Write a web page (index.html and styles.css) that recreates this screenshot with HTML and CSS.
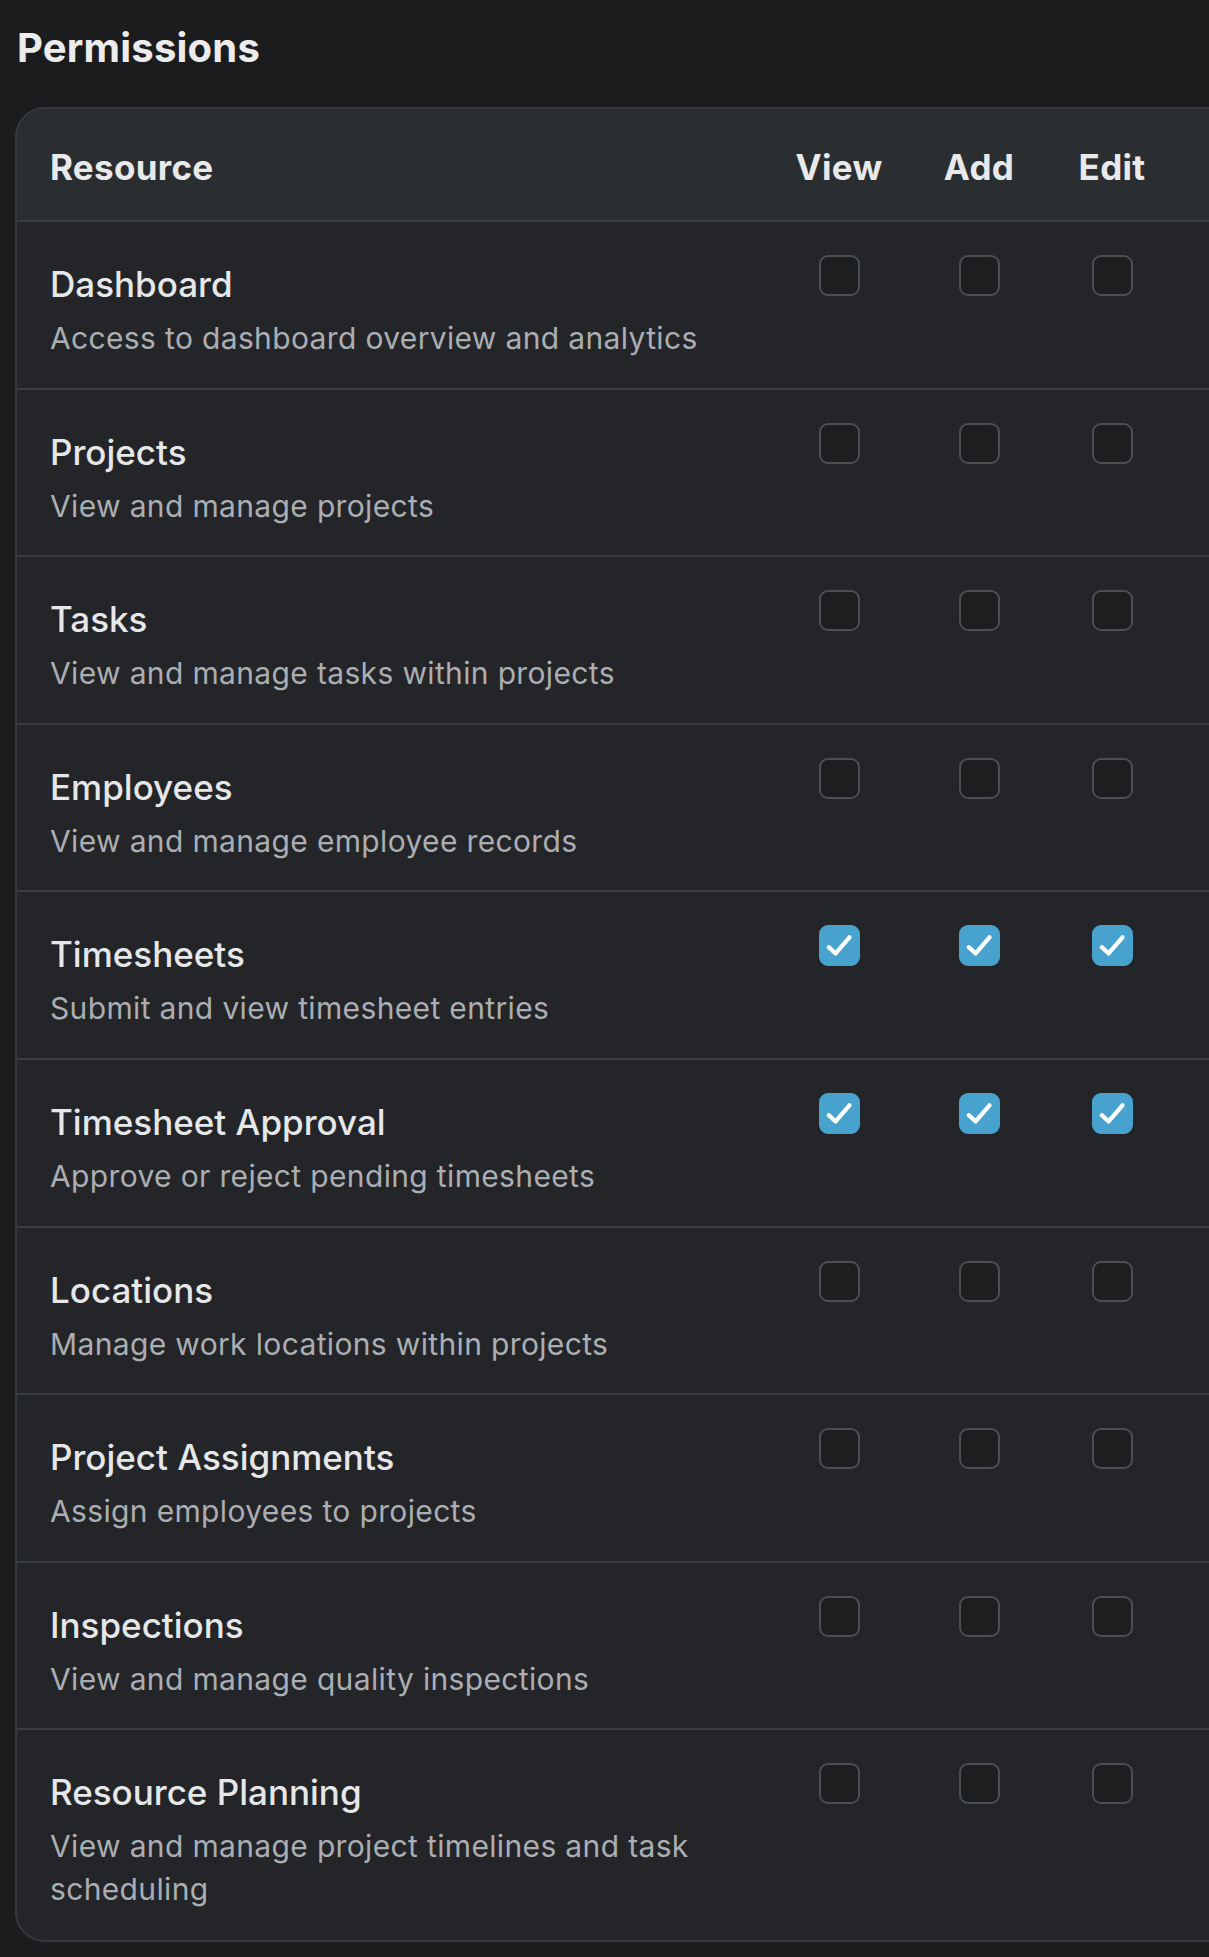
FILE: index.html
```html
<!DOCTYPE html>
<html lang="en">
<head>
<meta charset="utf-8">
<title>Permissions</title>
<link rel="stylesheet" href="styles.css">
</head>
<body>
<div class="page">
  <h2 class="title">Permissions</h2>
  <div class="card">
    <table class="perm">
      <colgroup>
        <col class="c-res"><col class="c-view"><col class="c-add"><col class="c-edit"><col class="c-rest">
      </colgroup>
      <thead>
        <tr><th class="th-res">Resource</th><th>View</th><th>Add</th><th>Edit</th><th></th></tr>
      </thead>
      <tbody>
        <tr>
          <td class="res"><div class="name">Dashboard</div><div class="desc">Access to dashboard overview and analytics</div></td>
          <td class="chk"><span class="cb"></span></td><td class="chk"><span class="cb"></span></td><td class="chk"><span class="cb"></span></td><td></td>
        </tr>
        <tr>
          <td class="res"><div class="name">Projects</div><div class="desc">View and manage projects</div></td>
          <td class="chk"><span class="cb"></span></td><td class="chk"><span class="cb"></span></td><td class="chk"><span class="cb"></span></td><td></td>
        </tr>
        <tr>
          <td class="res"><div class="name">Tasks</div><div class="desc">View and manage tasks within projects</div></td>
          <td class="chk"><span class="cb"></span></td><td class="chk"><span class="cb"></span></td><td class="chk"><span class="cb"></span></td><td></td>
        </tr>
        <tr>
          <td class="res"><div class="name">Employees</div><div class="desc">View and manage employee records</div></td>
          <td class="chk"><span class="cb"></span></td><td class="chk"><span class="cb"></span></td><td class="chk"><span class="cb"></span></td><td></td>
        </tr>
        <tr>
          <td class="res"><div class="name">Timesheets</div><div class="desc">Submit and view timesheet entries</div></td>
          <td class="chk"><span class="cb cb-on"><svg viewBox="0 0 20 20"><path d="M4.2 10.9 L7.9 14.3 L15.4 5.6"/></svg></span></td>
          <td class="chk"><span class="cb cb-on"><svg viewBox="0 0 20 20"><path d="M4.2 10.9 L7.9 14.3 L15.4 5.6"/></svg></span></td>
          <td class="chk"><span class="cb cb-on"><svg viewBox="0 0 20 20"><path d="M4.2 10.9 L7.9 14.3 L15.4 5.6"/></svg></span></td>
          <td></td>
        </tr>
        <tr>
          <td class="res"><div class="name">Timesheet Approval</div><div class="desc">Approve or reject pending timesheets</div></td>
          <td class="chk"><span class="cb cb-on"><svg viewBox="0 0 20 20"><path d="M4.2 10.9 L7.9 14.3 L15.4 5.6"/></svg></span></td>
          <td class="chk"><span class="cb cb-on"><svg viewBox="0 0 20 20"><path d="M4.2 10.9 L7.9 14.3 L15.4 5.6"/></svg></span></td>
          <td class="chk"><span class="cb cb-on"><svg viewBox="0 0 20 20"><path d="M4.2 10.9 L7.9 14.3 L15.4 5.6"/></svg></span></td>
          <td></td>
        </tr>
        <tr>
          <td class="res"><div class="name">Locations</div><div class="desc">Manage work locations within projects</div></td>
          <td class="chk"><span class="cb"></span></td><td class="chk"><span class="cb"></span></td><td class="chk"><span class="cb"></span></td><td></td>
        </tr>
        <tr>
          <td class="res"><div class="name">Project Assignments</div><div class="desc">Assign employees to projects</div></td>
          <td class="chk"><span class="cb"></span></td><td class="chk"><span class="cb"></span></td><td class="chk"><span class="cb"></span></td><td></td>
        </tr>
        <tr>
          <td class="res"><div class="name">Inspections</div><div class="desc">View and manage quality inspections</div></td>
          <td class="chk"><span class="cb"></span></td><td class="chk"><span class="cb"></span></td><td class="chk"><span class="cb"></span></td><td></td>
        </tr>
        <tr>
          <td class="res"><div class="name">Resource Planning</div><div class="desc desc-narrow">View and manage project timelines and task scheduling</div></td>
          <td class="chk"><span class="cb"></span></td><td class="chk"><span class="cb"></span></td><td class="chk"><span class="cb"></span></td><td></td>
        </tr>
      </tbody>
    </table>
  </div>
</div>
</body>
</html>
```

FILE: styles.css
```css
html, body {
  margin: 0;
  padding: 0;
  background: #1b1c1e;
}

.page {
  width: 1209px;
  min-height: 1957px;
  overflow: hidden;
  padding: 24px 0 0 15px;
  box-sizing: border-box;
  font-family: Inter, "Noto Sans", "Liberation Sans", sans-serif;
  color: #e6e7e8;
}

.title {
  margin: 0 0 35px 2px;
  font-size: 40px;
  line-height: 48px;
  font-weight: 700;
  letter-spacing: 0.2px;
  color: #ececed;
}

.card {
  width: 1320px;
  border: 2px solid #36393d;
  border-radius: 30px;
  overflow: hidden;
  background: #232528;
}

.perm {
  width: 1316px;
  border-collapse: separate;
  border-spacing: 0;
  table-layout: fixed;
}

.c-res { width: 748px; }
.c-view { width: 148px; }
.c-add { width: 132px; }
.c-edit { width: 134px; }
.c-rest { width: 154px; }

.perm thead th {
  background: #2b2e30;
  padding: 33px 0 28px;
  line-height: 50px;
  font-size: 35px;
  font-weight: 700;
  letter-spacing: 0.3px;
  color: #e8e9ea;
  text-align: center;
  border-bottom: 2px solid #3a3d41;
}

.perm thead th.th-res {
  text-align: left;
  padding-left: 33px;
}

.perm tbody td {
  vertical-align: top;
  padding: 33px 0 27.6px;
  border-bottom: 2px solid #3a3d41;
}

.perm tbody tr:last-child td {
  border-bottom: none;
  padding-bottom: 28.6px;
}

.perm td.res {
  padding-left: 33px;
}

.name {
  font-size: 35px;
  line-height: 58px;
  font-weight: 500;
  color: #e6e7e8;
}

.desc {
  margin-top: 4px;
  font-size: 30px;
  line-height: 43px;
  font-weight: 400;
  letter-spacing: 0.35px;
  color: #abaeb2;
}

.desc-narrow {
  max-width: 680px;
}

.perm td.chk {
  text-align: center;
  line-height: 0;
}

.cb {
  display: inline-block;
  width: 41px;
  height: 41px;
  box-sizing: border-box;
  border: 2px solid #4b4e53;
  border-radius: 9px;
  background: #1c1e20;
  vertical-align: top;
}

.cb-on {
  background: #47a2cd;
  border-color: #47a2cd;
}

.cb svg {
  display: block;
  width: 100%;
  height: 100%;
  fill: none;
  stroke: #ffffff;
  stroke-width: 2.3;
  stroke-linecap: round;
  stroke-linejoin: round;
}
```
